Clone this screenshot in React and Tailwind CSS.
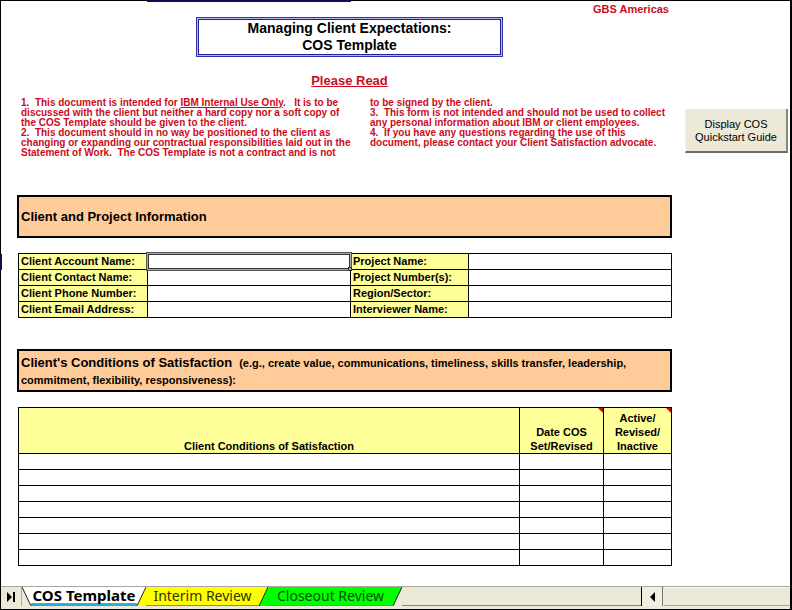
import React from "react";

const clientFields = [
  ["Client Account Name:", "Project Name:"],
  ["Client Contact Name:", "Project Number(s):"],
  ["Client Phone Number:", "Region/Sector:"],
  ["Client Email Address:", "Interviewer Name:"],
];

const conditionRows = [1, 2, 3, 4, 5, 6, 7];

const labelCell = "border border-black bg-[#ffff99] p-0 pl-0.5 text-left text-[11px] leading-[15px] font-bold";
const inputCell = "border border-black p-0";
const cellInput = "block h-[15px] w-full bg-transparent px-1 text-[11px] outline-none";

function Field({ label, selected }) {
  const id = label.replace(/[^A-Za-z]/g, "");
  return (
    <>
      <th scope="row" className={labelCell}>
        <label htmlFor={id}>{label}</label>
      </th>
      <td className={inputCell + " relative"}>
        <input id={id} className={cellInput} />
        {selected && (
          <>
            <span className="pointer-events-none absolute -inset-0.5 border border-[#555] shadow-[inset_0_0_0_1px_#a8a8b0,inset_0_0_0_2px_#333]" />
            <span className="pointer-events-none absolute -right-0.5 -bottom-0.5 size-1 border border-[#333] bg-[#a8a8b0]" />
          </>
        )}
      </td>
    </>
  );
}

function NoteMark() {
  return (
    <svg className="absolute top-0 right-0 size-1.5" viewBox="0 0 6 6" aria-hidden="true">
      <path d="M1 0H6V5Z" fill="#c01010" />
    </svg>
  );
}

function TabEdge({ left, right, falling }) {
  return (
    <svg className="h-[19px] w-[9px] shrink-0" viewBox="0 0 9 19" aria-hidden="true">
      <rect width="9" height="19" fill={left} />
      <path d={falling ? "M0 0H9V19Z" : "M9 0V19H0Z"} fill={right} />
      <path d={falling ? "M0 0L9 19" : "M9 0L0 19"} stroke="#222" strokeWidth="1" fill="none" />
    </svg>
  );
}

export default function App() {
  return (
    <div className="relative flex min-h-screen flex-col border border-r-2 border-black bg-white font-['Liberation_Sans',Arial,sans-serif] text-black">
      <span className="absolute -top-px left-[146px] h-0.5 w-[204px] bg-[#101050]" />
      <span className="absolute top-[253px] -left-px h-4 w-0.5 bg-[#101050]" />

      <div className="flex flex-1 gap-[13px] pr-0.5 pb-5 pl-4">
        <main className="min-w-0 flex-1">
          <p className="pt-0.5 pr-[3px] text-right text-[11px] leading-3 font-bold text-[#cc0a1c]">GBS Americas</p>

          <header className="flex flex-col items-center pl-2.5">
            <h1 className="mt-0.5 w-[307px] border border-[#3434a8] bg-[#b4b4f4] p-px text-center text-[14px] leading-[17px] font-bold">
              <span className="block border border-[#20209a] bg-white">
                Managing Client Expectations:
                <br />
                COS Template
              </span>
            </h1>
            <h2 className="mt-4 text-[13px] leading-4 font-bold text-[#cc0a1c] underline">Please Read</h2>
          </header>

          <div className="mt-[9px] flex gap-2 pl-1 text-[10px] leading-[10px] font-bold whitespace-pre text-[#cc0a1c]">
            <p className="w-[341px]">
              1.  This document is intended for <span className="underline">IBM Internal Use Only</span>.   It is to be
              <br />
              discussed with the client but neither a hard copy nor a soft copy of
              <br />
              the COS Template should be given to the client.
              <br />
              2.  This document should in no way be positioned to the client as
              <br />
              changing or expanding our contractual responsibilities laid out in the
              <br />
              Statement of Work.  The COS Template is not a contract and is not
            </p>
            <p>
              to be signed by the client.
              <br />
              3.  This form is not intended and should not be used to collect
              <br />
              any personal information about IBM or client employees.
              <br />
              4.  If you have any questions regarding the use of this
              <br />
              document, please contact your Client Satisfaction advocate.
            </p>
          </div>

          <h2 className="mt-[37px] flex h-[43px] items-center border-2 border-black bg-[#ffcc99] px-0.5 text-[13px] font-bold">
            Client and Project Information
          </h2>

          <div className="mt-[15px] pl-px">
            <table className="w-full table-fixed border-collapse">
              <colgroup>
                <col className="w-[129px]" />
                <col className="w-[203px]" />
                <col className="w-[118px]" />
                <col />
              </colgroup>
              <tbody>
                {clientFields.map(([a, b], i) => (
                  <tr key={a}>
                    <Field label={a} selected={i === 0} />
                    <Field label={b} />
                  </tr>
                ))}
              </tbody>
            </table>
          </div>

          <h2 className="mt-[31px] h-[43px] border-2 border-black bg-[#ffcc99] px-0.5 pt-[3px] text-[11px] leading-[17px] font-bold">
            <span className="mr-1 text-[13px]">Client's Conditions of Satisfaction</span> (e.g., create value, communications, timeliness, skills transfer, leadership,
            <br />
            commitment, flexibility, responsiveness):
          </h2>

          <div className="mt-[15px] pl-px">
            <table className="w-full table-fixed border-collapse">
              <colgroup>
                <col />
                <col className="w-[84px]" />
                <col className="w-[68px]" />
              </colgroup>
              <thead>
                <tr className="h-[46px] bg-[#ffff99] align-bottom text-[11px] leading-[14px]">
                  <th scope="col" className="border border-black p-0">Client Conditions of Satisfaction</th>
                  <th scope="col" className="relative border border-black p-0">
                    Date COS
                    <br />
                    Set/Revised
                    <NoteMark />
                  </th>
                  <th scope="col" className="relative border border-black p-0">
                    Active/
                    <br />
                    Revised/
                    <br />
                    Inactive
                    <NoteMark />
                  </th>
                </tr>
              </thead>
              <tbody>
                {conditionRows.map((n) => (
                  <tr key={n}>
                    <td className={inputCell}><input aria-label={"Condition " + n} className={cellInput} /></td>
                    <td className={inputCell}><input aria-label={"Date " + n} className={cellInput} /></td>
                    <td className={inputCell}><input aria-label={"Status " + n} className={cellInput} /></td>
                  </tr>
                ))}
              </tbody>
            </table>
          </div>
        </main>

        <aside className="w-[103px] pt-[108px]">
          <button className="h-11 w-full border-r-2 border-b-2 border-l border-r-[#8a887c] border-b-[#6e6c62] border-l-[#f6f5ee] bg-[#ece9d8] pt-0.5 text-[11px] leading-[13px]">
            Display COS
            <br />
            Quickstart Guide
          </button>
        </aside>
      </div>

      <footer className="flex h-[23px] border-t border-[#aaa89c] bg-[#ece9d8] pb-[3px] font-['Noto_Sans',sans-serif] text-[14px] leading-[18px]">
        <button aria-label="Last sheet" className="flex w-[21px] items-center justify-center border-r border-[#aaa89c]">
          <svg className="h-2.5 w-2" viewBox="0 0 8 10" aria-hidden="true">
            <path d="M0 0L5 5L0 10ZM6 0H8V10H6Z" fill="#000" />
          </svg>
        </button>
        <nav className="flex min-w-0 flex-1 border-b border-[#88867c] whitespace-nowrap">
          <TabEdge left="#ece9d8" right="#ffffff" falling />
          <button className="w-[106px] border-b-2 border-[#30b0d8] bg-white text-[15px] leading-[17px] font-bold">COS Template</button>
          <TabEdge left="#ffffff" right="#ffff00" />
          <button className="w-[113px] bg-[#ffff00] text-[#333300]">Interim Review</button>
          <TabEdge left="#ffff00" right="#00ff00" />
          <button className="w-[125px] bg-[#00ff00] text-[#005000]">Closeout Review</button>
          <TabEdge left="#00ff00" right="#ece9d8" />
        </nav>
        <button aria-label="Scroll left" className="mr-px flex w-[22px] items-center justify-center border-r border-l border-r-[#77756c] border-l-black bg-[#f0eee2]">
          <svg className="h-2.5 w-[5px]" viewBox="0 0 5 10" aria-hidden="true">
            <path d="M5 0V10L0 5Z" fill="#000" />
          </svg>
        </button>
        <div className="w-[126px] border-t border-b border-t-[#fafaf4] border-b-[#aaa89c]" />
      </footer>
    </div>
  );
}
